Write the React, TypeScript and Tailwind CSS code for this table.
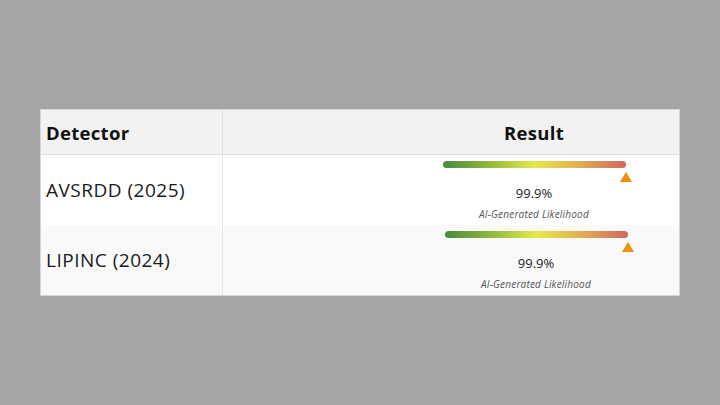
import React from "react";

type Row = {
  name: string;
  score: number;
  shift: string;
  bg: string;
};

const rows: Row[] = [
  { name: "AVSRDD (2025)", score: 99.9, shift: "pr-[50px]", bg: "bg-white" },
  { name: "LIPINC (2024)", score: 99.9, shift: "pr-[48px]", bg: "bg-[#f9f9f9]" },
];

function Meter({ score }: { score: number }) {
  return (
    <div className="w-[190px] flex flex-col items-center">
      <div className="relative w-[183px] h-[7px] mt-[6px]">
        <div className="w-full h-full rounded-full bg-[linear-gradient(to_right,#468a3e,#8fb83f_25%,#e6e84a_50%,#e2b452_72%,#d0675f)]" />
        <div
          className="absolute top-[11px] -translate-x-1/2 ml-[1px] w-0 h-0 border-l-[6px] border-r-[6px] border-b-[10px] border-l-transparent border-r-transparent border-b-[#f0900a]"
          style={{ left: `${score}%` }}
        />
      </div>
      <div className="mt-[17px] text-[13px] leading-[16px] text-[#222]">{score}%</div>
      <div className="mt-[7px] text-[10px] leading-[12px] italic text-[#555] tracking-[0.2px]">AI-Generated Likelihood</div>
    </div>
  );
}

export default function App() {
  return (
    <div className="w-[720px] h-[405px] bg-[#a5a5a5] pt-[109px] pl-[40px] font-['Open_Sans',sans-serif]">
      <div className="w-[640px] border border-[#d6d6d6] bg-white">
        <div className="flex h-[45px] bg-[#f2f2f2] border-b border-[#dedede]">
          <div className="w-[182px] border-r border-[#e0e0e0] flex items-center pl-[5px] pt-[2px] text-[18.5px] font-bold tracking-[0.3px] text-[#111]">
            Detector
          </div>
          <div className="flex-1 flex justify-end pr-[50px] items-center pt-[2px]">
            <div className="w-[190px] text-center text-[18.5px] font-bold tracking-[0.3px] text-[#111]">Result</div>
          </div>
        </div>
        {rows.map((r) => (
          <div key={r.name} className={`flex h-[70px] ${r.bg}`}>
            <div className="w-[182px] border-r border-[#e6e6e6] flex items-center pl-[5px] text-[19px] tracking-[0.5px] text-[#1a1a1a]">
              {r.name}
            </div>
            <div className={`flex-1 flex justify-end ${r.shift}`}>
              <Meter score={r.score} />
            </div>
          </div>
        ))}
      </div>
    </div>
  );
}
